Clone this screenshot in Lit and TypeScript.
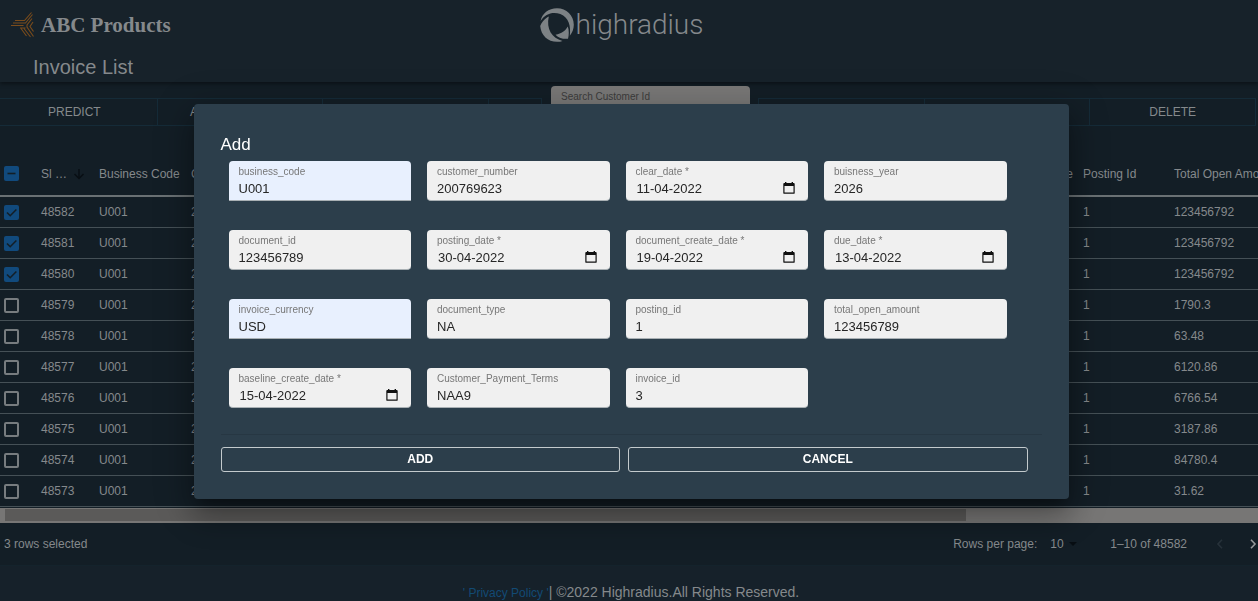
import { LitElement, html, css, svg, nothing } from "lit";
import { customElement } from "lit/decorators.js";
import { classMap } from "lit/directives/class-map.js";

interface Field {
  name: string;
  value: string;
  date?: boolean;
  filled?: boolean;
}

const fields: Field[] = [
  { name: "business_code", value: "U001", filled: true },
  { name: "customer_number", value: "200769623" },
  { name: "clear_date", value: "11-04-2022", date: true },
  { name: "buisness_year", value: "2026" },
  { name: "document_id", value: "123456789" },
  { name: "posting_date", value: "30-04-2022", date: true },
  { name: "document_create_date", value: "19-04-2022", date: true },
  { name: "due_date", value: "13-04-2022", date: true },
  { name: "invoice_currency", value: "USD", filled: true },
  { name: "document_type", value: "NA" },
  { name: "posting_id", value: "1" },
  { name: "total_open_amount", value: "123456789" },
  { name: "baseline_create_date", value: "15-04-2022", date: true },
  { name: "Customer_Payment_Terms", value: "NAA9" },
  { name: "invoice_id", value: "3" },
];

const rows = [
  { id: "48582", amount: "123456792", checked: true },
  { id: "48581", amount: "123456792", checked: true },
  { id: "48580", amount: "123456792", checked: true },
  { id: "48579", amount: "1790.3", checked: false },
  { id: "48578", amount: "63.48", checked: false },
  { id: "48577", amount: "6120.86", checked: false },
  { id: "48576", amount: "6766.54", checked: false },
  { id: "48575", amount: "3187.86", checked: false },
  { id: "48574", amount: "84780.4", checked: false },
  { id: "48573", amount: "31.62", checked: false },
];

const calendarIcon = svg`<svg viewBox="0 0 12 12" width="12" height="12" aria-hidden="true">
  <path fill="#111" fill-rule="evenodd" d="M2 0h1.4v1h5.2V0H10v1h.8c.5 0 .9.4.9.9v9c0 .5-.4.9-.9.9H1.2c-.5 0-.9-.4-.9-.9v-9c0-.5.4-.9.9-.9H2zM1.5 4v6.600h9V4z"/>
</svg>`;

@customElement("add-invoice-dialog")
export class AddInvoiceDialog extends LitElement {
  static styles = css`
    :host {
      display: block;
      box-sizing: border-box;
      width: 875px;
      max-width: calc(100% - 64px);
      padding: 31px 27px 27px;
      border-radius: 4px;
      background: #2c3e4b;
      color: #fff;
      font-family: "Liberation Sans", Arial, sans-serif;
      box-shadow: 0 9px 12px -6px rgba(0, 0, 0, 0.3),
        0 19px 30px 2px rgba(0, 0, 0, 0.22), 0 7px 37px 6px rgba(0, 0, 0, 0.18);
    }
    .title {
      margin: 0 0 6px;
      font-size: 17px;
      line-height: 20px;
      font-weight: 400;
    }
    .fields {
      display: grid;
      grid-template-columns: repeat(4, 1fr);
      gap: 29px 16px;
      padding: 0 35px 0 8px;
    }
    .field {
      position: relative;
      display: block;
      height: 40px;
      box-sizing: border-box;
      border-radius: 4px;
      border-bottom: 1px solid #a9b0b4;
      background: #f0f0f0;
      overflow: hidden;
    }
    .filled {
      background: #e8f0fe;
      border-radius: 4px 4px 0 0;
    }
    .caption {
      position: absolute;
      left: 10px;
      top: 5px;
      font-size: 10px;
      line-height: 12px;
      color: #777;
      pointer-events: none;
    }
    .control {
      display: block;
      box-sizing: border-box;
      width: 100%;
      height: 39px;
      padding: 18px 10px 3px;
      border: 0;
      outline: 0;
      background: transparent;
      font: 13px/18px "Liberation Sans", Arial, sans-serif;
      color: #262626;
    }
    .date {
      padding-left: 11px;
    }
    .picker {
      position: absolute;
      right: 13px;
      top: 21px;
      width: 12px;
      height: 12px;
      padding: 0;
      border: 0;
      background: none;
    }
    .picker svg {
      display: block;
    }
    .actions {
      display: grid;
      grid-template-columns: 1fr 1fr;
      gap: 8px;
      margin-top: 26px;
      padding: 12px 14px 0 0;
      border-top: 1px solid #273743;
    }
    .action {
      height: 25px;
      padding: 0;
      border: 1px solid #c3cacd;
      border-radius: 3px;
      background: none;
      color: #fff;
      font: 700 12px/23px "Liberation Sans", Arial, sans-serif;
    }
  `;

  render() {
    return html`
      <h2 class="title">Add</h2>
      <form @submit=${(e: Event) => e.preventDefault()}>
        <div class="fields">
          ${fields.map(
            (f) => html`
              <div class=${classMap({ field: true, filled: !!f.filled })}>
                <label class="caption" for=${f.name}>${f.name}${f.date ? " *" : ""}</label>
                <input
                  class=${classMap({ control: true, date: !!f.date })}
                  id=${f.name}
                  name=${f.name}
                  type="text"
                  .value=${f.value}
                />
                ${f.date
                  ? html`<button class="picker" type="button" aria-label="Choose ${f.name}">
                      ${calendarIcon}
                    </button>`
                  : nothing}
              </div>
            `
          )}
        </div>
        <div class="actions">
          <button class="action" type="submit">ADD</button>
          <button class="action" type="button">CANCEL</button>
        </div>
      </form>
    `;
  }
}

@customElement("app-root")
export class AppRoot extends LitElement {
  static styles = css`
    :host {
      display: flex;
      flex-direction: column;
      min-height: 100vh;
      overflow: hidden;
      background: #131e26;
      color: #85898c;
      font: 12px/16px "Liberation Sans", Arial, sans-serif;
    }
    .header {
      background: #17222a;
      box-shadow: 0 2px 4px rgba(0, 0, 0, 0.4);
    }
    .brand-row {
      display: grid;
      grid-template-columns: 1fr auto 1fr;
      align-items: center;
      height: 50px;
      padding: 0 26px 0 11px;
    }
    .brand {
      display: flex;
      align-items: center;
      gap: 6px;
      font: 700 21px/26px "Liberation Serif", "Times New Roman", serif;
    }
    .logo {
      display: flex;
      align-items: center;
      gap: 2px;
      font: 300 28px/36px Roboto, sans-serif;
    }
    .page-title {
      margin: 0;
      padding: 5px 33px 2px;
      font-size: 20px;
      line-height: 25px;
      font-weight: 400;
    }
    .toolbar {
      display: flex;
      align-items: flex-start;
      margin-left: -8px;
      padding: 4px 2px 0 0;
      height: 46px;
    }
    .tool {
      flex: 1 1 0;
      box-sizing: border-box;
      height: 28px;
      margin-top: 12px;
      padding: 0;
      border: 1px solid #152b38;
      border-left-width: 0;
      background: none;
      color: inherit;
      font: 12px/26px "Liberation Sans", Arial, sans-serif;
    }
    .search + .tool {
      border-left-width: 1px;
    }
    .small {
      flex: 0 0 53px;
    }
    .search {
      box-sizing: border-box;
      width: 199px;
      height: 40px;
      margin: 0 8px 0 9px;
      padding: 4px 10px;
      border-radius: 4px;
      background: #797877;
      color: #3c3c3c;
      font-size: 10px;
      line-height: 13px;
    }
    .search-label {
      display: block;
    }
    .search-input {
      display: block;
      width: 100%;
      height: 18px;
      padding: 0;
      border: 0;
      outline: 0;
      background: none;
    }
    .grid {
      overflow: hidden;
    }
    .table {
      width: calc(100% + 48px);
      border-collapse: separate;
      border-spacing: 0;
      table-layout: fixed;
    }
    .table th,
    .table td {
      box-sizing: border-box;
      padding: 0 0 0 10px;
      text-align: left;
      font-weight: 400;
      white-space: nowrap;
      overflow: hidden;
    }
    .table th {
      height: 65px;
      padding-top: 20px;
      border-bottom: 2px solid #6a7174;
    }
    .table td {
      height: 31px;
      border-bottom: 1px solid #455056;
    }
    .table .pick {
      padding-left: 4px;
    }
    .c-pick { width: 31px; }
    .c-id { width: 58px; }
    .c-code { width: 92px; }
    .c-type { width: 94px; }
    .c-posting { width: 91px; }
    .c-amount { width: 142px; }
    .sorted {
      display: flex;
      justify-content: space-between;
      align-items: center;
      margin-right: 4px;
    }
    .box {
      appearance: none;
      display: block;
      box-sizing: border-box;
      width: 15px;
      height: 15px;
      margin: 0;
      border: 2px solid #777c7f;
      border-radius: 2px;
    }
    .box:checked,
    .box.some {
      border: 0;
      background: #114a7d
        url("data:image/svg+xml,%3Csvg xmlns='http://www.w3.org/2000/svg' viewBox='0 0 15 15'%3E%3Cpath d='M3 7.5l3.2 3.2L12.4 4.5' fill='none' stroke='%23131e26' stroke-width='1.6'/%3E%3C/svg%3E");
    }
    .box.some {
      background-image: url("data:image/svg+xml,%3Csvg xmlns='http://www.w3.org/2000/svg' viewBox='0 0 15 15'%3E%3Cpath d='M3.5 7.5h8' stroke='%23131e26' stroke-width='1.6'/%3E%3C/svg%3E");
    }
    .scroll {
      margin-top: 1px;
      padding: 1px 0 2px 5px;
      background: #777675;
    }
    .thumb {
      height: 12px;
      width: 76.7%;
      background: #5b5a59;
    }
    .pager {
      display: flex;
      align-items: center;
      height: 42px;
      padding: 0 1px 0 4px;
      border-bottom: 1px solid #14232c;
    }
    .selected {
      flex: 1;
    }
    .size {
      appearance: none;
      width: 16px;
      margin: 0 3px 0 13px;
      padding: 0;
      border: 0;
      background: none;
      color: inherit;
      font: 12px/16px "Liberation Sans", Arial, sans-serif;
    }
    .caret {
      margin-right: 33px;
    }
    .page {
      display: flex;
      width: 8px;
      padding: 0;
      border: 0;
      background: none;
      color: #96999b;
    }
    .prev {
      margin: 0 25px 0 29px;
      color: #27323a;
    }
    .footer {
      display: flex;
      flex: 1;
      justify-content: center;
      align-items: flex-end;
      background: #16212a;
      padding-left: 4px;
      font-size: 14px;
      line-height: 16px;
      white-space: pre;
    }
    .policy {
      color: #124a74;
      font-size: 12px;
      text-decoration: none;
    }
    .backdrop {
      position: fixed;
      inset: 0;
      display: flex;
      align-items: center;
      justify-content: center;
      padding: 2px 0 0 4px;
    }
  `;

  render() {
    return html`
      <header class="header">
        <div class="brand-row">
          <div class="brand">
            <svg viewBox="0 0 24 26" width="24" height="26" fill="none" stroke="#7a4c1c" stroke-width="1.1" aria-hidden="true">
              <path d="M4 8.500h9.500l7-8M2 11h12.500l7-8.500M0 13.500h12.500M9 16h5.500M21 6.500l-5 6.500v2l6.500 9.500M13 16.500l6.500 8.500M10 16.500l5.500 7.500M22 10l-3 4.500 3.500 5"/>
            </svg>
            <span>ABC Products</span>
          </div>
          <div class="logo">
            <svg viewBox="0 0 34 34" width="34" height="34" fill="#7d8285" aria-hidden="true">
              <path d="M.6 13C2 5.500 8.500.3 17 .3c9.500 0 16.800 7.200 16.800 16.400 0 4-1.500 8-4 11 1.200-9.500-1-18.500-9.500-21.700C13 3.300 5 5.500.6 13z"/>
              <path d="M7 9.500C4 11.500 1.500 14.500.2 18 1 27.500 8 34 17.500 33.800c1.800 0 3.400-.4 5-.9C12 30.500 6 21 8.800 8.600 8 8.900 7.500 9.200 7 9.500z"/>
              <path d="M27.800 18.500c-2.500 4.500-6 7-12.300 8.200 3.500 3.500 8 4.500 12.500 4 1-3 1.200-8.500-.2-12.200z"/>
            </svg>
            <span>highradius</span>
          </div>
        </div>
        <h1 class="page-title">Invoice List</h1>
      </header>

      <div class="toolbar">
        <button class="tool">PREDICT</button>
        <button class="tool">ANALYTICS VIEW</button>
        <button class="tool">ADVANCE SEARCH</button>
        <button class="tool small" aria-label="Refresh"></button>
        <div class="search">
          <label class="search-label" for="search">Search Customer Id</label>
          <input class="search-input" id="search" type="text" />
        </div>
        <button class="tool">ADD</button>
        <button class="tool">EDIT</button>
        <button class="tool">DELETE</button>
      </div>

      <div class="grid">
        <table class="table">
          <colgroup>
            <col class="c-pick" /><col class="c-id" /><col class="c-code" /><col />
            <col class="c-type" /><col class="c-posting" /><col class="c-amount" />
          </colgroup>
          <thead>
            <tr>
              <th class="pick"><input class="box some" type="checkbox" aria-label="Select all" /></th>
              <th>
                <span class="sorted">Sl …
                  <svg viewBox="0 0 12 12" width="12" height="12" fill="none" stroke="#080e13" stroke-width="1.4" aria-hidden="true">
                    <path d="M6 1v9.500M1.500 6 6 10.500 10.500 6" />
                  </svg>
                </span>
              </th>
              <th>Business Code</th>
              <th>Customer Number</th>
              <th>Document Type</th>
              <th>Posting Id</th>
              <th>Total Open Amount</th>
            </tr>
          </thead>
          <tbody>
            ${rows.map(
              (r) => html`
                <tr>
                  <td class="pick">
                    <input class="box" type="checkbox" .checked=${r.checked} aria-label="Select ${r.id}" />
                  </td>
                  <td>${r.id}</td>
                  <td>U001</td>
                  <td>200769623</td>
                  <td>NA</td>
                  <td>1</td>
                  <td>${r.amount}</td>
                </tr>
              `
            )}
          </tbody>
        </table>
      </div>
      <div class="scroll"><div class="thumb"></div></div>

      <div class="pager">
        <span class="selected">3 rows selected</span>
        <label for="size">Rows per page:</label>
        <select class="size" id="size"><option>10</option></select>
        <svg class="caret" viewBox="0 0 8 4" width="8" height="4" fill="#080e13" aria-hidden="true"><path d="M0 0h8L4 4z" /></svg>
        <span>1–10 of 48582</span>
        <button class="page prev" aria-label="Previous page">
          <svg viewBox="0 0 8 10" width="8" height="10" fill="none" stroke="currentColor" stroke-width="1.600"><path d="M6 .8 2 5l4 4.200" /></svg>
        </button>
        <button class="page" aria-label="Next page">
          <svg viewBox="0 0 8 10" width="8" height="10" fill="none" stroke="currentColor" stroke-width="1.600"><path d="M2 .8 6 5 2 9.200" /></svg>
        </button>
      </div>

      <footer class="footer"><span><a class="policy" href="#privacy">' Privacy Policy '</a>| ©2022 Highradius.All Rights Reserved.</span></footer>

      <div class="backdrop">
        <add-invoice-dialog role="dialog" aria-label="Add"></add-invoice-dialog>
      </div>
    `;
  }
}
